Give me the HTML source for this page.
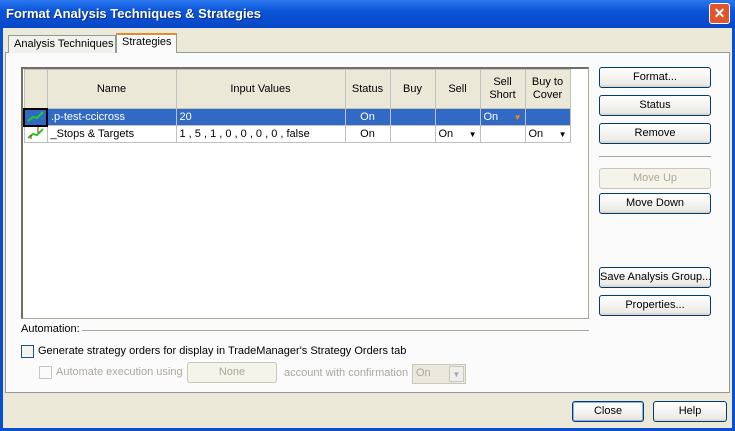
<!DOCTYPE html><html><head><style>
*{box-sizing:border-box;margin:0;padding:0}
body{width:735px;height:431px;overflow:hidden;font-family:"Liberation Sans",sans-serif;font-size:11px;background:#0a4fd0;position:relative}
.a{position:absolute;white-space:nowrap}
.win{left:3px;top:28px;width:729px;height:400px;background:#ece9d8}
.title{left:0;top:0;width:735px;height:28px;background:linear-gradient(#2a76ee,#0a55d8 40%,#0848c8);color:#fff;font-weight:bold;font-size:13px;padding:6px 0 0 6px;text-shadow:1px 1px #0a2a7a}
.x{left:709px;top:3px;width:21px;height:21px;background:#e0552c;border:1px solid #fff;border-radius:3px;color:#fff;font-size:14px;text-align:center;line-height:19px;font-weight:bold}
.panel{left:5px;top:52px;width:725px;height:341px;background:#fbfbfc;border:1px solid #919b9c}
.tab{height:18px;border:1px solid #919b9c;border-bottom:none;background:#f2f2ec;padding:2px 5px;font-size:11px}
.btn{position:absolute;border:1px solid #003c74;border-radius:3px;background:linear-gradient(#fff,#ecebe6 85%,#d6d0c5);text-align:center;line-height:19px;font-size:11px;color:#000;white-space:nowrap}
.dis{border-color:#c9c7ba;color:#aca899;background:#f5f4ea}
table{border-collapse:collapse;position:absolute;left:23px;top:69px;table-layout:fixed;width:546px}
td{border:1px solid #c0c0c0;height:16px;padding:0 3px;white-space:nowrap;overflow:hidden}
th{background:#ebe8d8;border:1px solid #c0c0c0;font-weight:normal;height:39px;line-height:13px}
.sel td{background:#316ac5;color:#fff}
.dd{float:right;font-size:8px;margin-top:2px}
</style></head><body>
<div class="a title">Format Analysis Techniques &amp; Strategies</div>
<div class="a x">✕</div>
<div class="a win"></div>
<div class="a panel"></div>
<div class="a tab" style="left:8px;top:35px;width:108px">Analysis Techniques</div>
<div class="a tab" style="left:116px;top:33px;width:61px;height:20px;background:#fbfbfc;border-top:2px solid #e68b2c;padding-top:1px">Strategies</div>
<div class="a" style="left:21px;top:67px;width:568px;height:252px;background:#fff;border:1px solid #aca899;border-top:2px solid #716f64;border-left:2px solid #716f64"></div>
<table>
<colgroup><col style="width:23px"><col style="width:129px"><col style="width:169px"><col style="width:45px"><col style="width:45px"><col style="width:45px"><col style="width:45px"><col style="width:45px"></colgroup>
<tr><th></th><th>Name</th><th>Input Values</th><th>Status</th><th>Buy</th><th>Sell</th><th>Sell<br>Short</th><th>Buy to<br>Cover</th></tr>
<tr class="sel"><td style="border:2px solid #000;background:#316ac5;padding:0 2px"><svg width="17" height="12"><path d="M1 11L6 7 10 8 16 2" stroke="#2c2" stroke-width="2" fill="none"/></svg></td><td>.p-test-ccicross</td><td>20</td><td style="text-align:center">On</td><td></td><td></td><td>On <span class="dd" style="color:#f80">▼</span></td><td></td></tr>
<tr><td style="padding:0 2px"><svg width="17" height="12"><path d="M1 11L6 7 10 8 16 2" stroke="#2c2" stroke-width="2" fill="none"/><path d="M11 0v6M4 8v4" stroke="#d00" stroke-width="1"/></svg></td><td>_Stops &amp; Targets</td><td>1 , 5 , 1 , 0 , 0 , 0 , 0 , false</td><td style="text-align:center">On</td><td></td><td>On <span class="dd">▼</span></td><td></td><td>On <span class="dd">▼</span></td></tr>
</table>
<div class="btn" style="left:599px;top:67px;width:112px;height:21px">Format...</div>
<div class="btn" style="left:599px;top:95px;width:112px;height:21px">Status</div>
<div class="btn" style="left:599px;top:123px;width:112px;height:21px">Remove</div>
<div class="a" style="left:599px;top:156px;width:112px;border-top:1px solid #aca899"></div>
<div class="btn dis" style="left:599px;top:168px;width:112px;height:21px">Move Up</div>
<div class="btn" style="left:599px;top:193px;width:112px;height:21px">Move Down</div>
<div class="btn" style="left:599px;top:267px;width:112px;height:21px">Save Analysis Group...</div>
<div class="btn" style="left:599px;top:295px;width:112px;height:21px">Properties...</div>
<div class="a" style="left:21px;top:323px">Automation:</div>
<div class="a" style="left:82px;top:330px;width:507px;border-top:1px solid #aca899"></div>
<div class="a" style="left:21px;top:345px;width:13px;height:13px;border:1px solid #1c5180;background:#f4f4ee"></div>
<div class="a" style="left:38px;top:345px">Generate strategy orders for display in TradeManager's Strategy Orders tab</div>
<div class="a" style="left:39px;top:366px;width:13px;height:13px;border:1px solid #cac8bb"></div>
<div class="a" style="left:56px;top:366px;color:#aca899">Automate execution using</div>
<div class="btn dis" style="left:187px;top:362px;width:90px;height:21px">None</div>
<div class="a" style="left:284px;top:367px;color:#aca899">account with confirmation</div>
<div class="a" style="left:412px;top:364px;width:54px;height:20px;border:1px solid #cac8bb;background:#ebe9dd;color:#aca899;padding:2px 3px">On<span style="position:absolute;right:1px;top:1px;width:15px;height:16px;border:1px solid #cac8bb;background:#eee;font-size:8px;text-align:center;line-height:15px">▼</span></div>
<div class="btn" style="left:572px;top:401px;width:72px;height:21px;box-shadow:inset 0 0 0 1px #8fb0ea">Close</div>
<div class="btn" style="left:653px;top:401px;width:74px;height:21px">Help</div>
</body></html>
